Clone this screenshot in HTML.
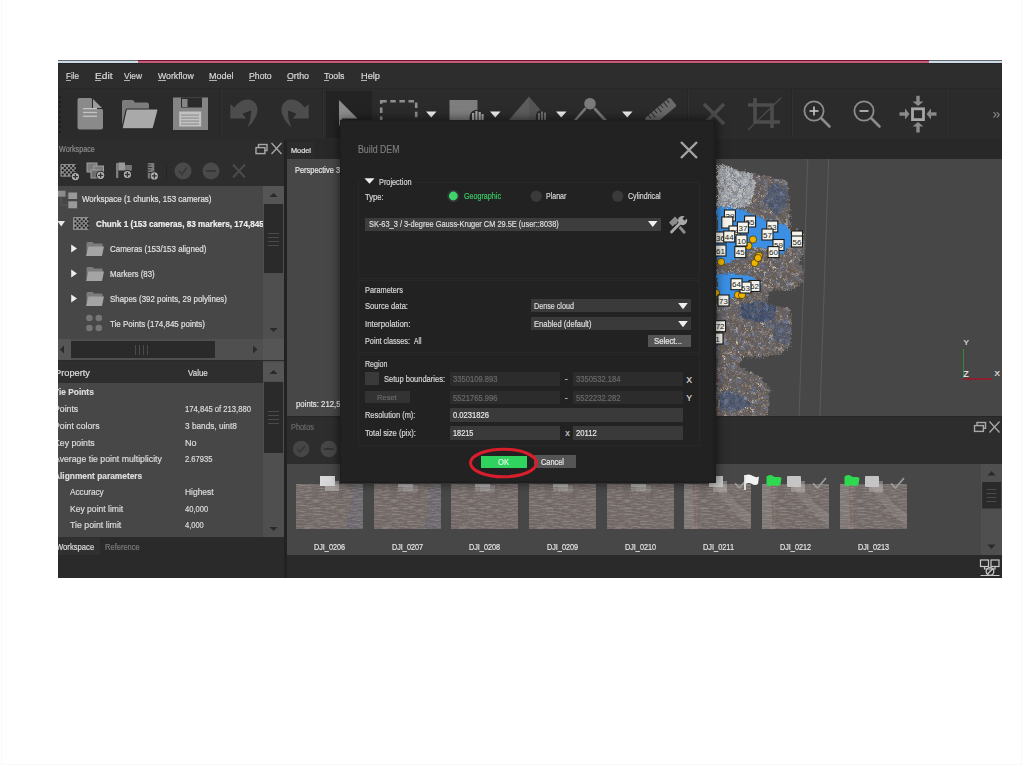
<!DOCTYPE html>
<html><head><meta charset="utf-8"><title>Build DEM</title>
<style>
html,body{margin:0;padding:0;}
body{width:1024px;height:767px;background:#ffffff;position:relative;overflow:hidden;font-family:"Liberation Sans",sans-serif;}
div,svg{position:absolute;}
.t{white-space:nowrap;-webkit-text-stroke:0.2px currentColor;}
</style></head><body>
<div style="left:1px;top:0px;width:1px;height:765px;background:#f9f9f9;"></div>
<div style="left:1021px;top:0px;width:1px;height:765px;background:#f8f8f8;"></div>
<div style="left:1px;top:764px;width:1021px;height:1px;background:#f9f9f9;"></div>
<div style="left:58px;top:60px;width:944px;height:518px;background:#2b2b2b;"></div>
<div style="left:58px;top:60px;width:944px;height:1px;background:#6a6a6a;"></div>
<div style="left:58px;top:61px;width:80px;height:2px;background:#c9dbe8;"></div>
<div style="left:138px;top:61px;width:791px;height:2px;background:#c06078;"></div>
<div style="left:138px;top:60px;width:791px;height:1px;background:#7a1030;"></div>
<div style="left:929px;top:61px;width:73px;height:2px;background:#c9dbe8;"></div>
<div style="left:58px;top:63px;width:944px;height:1px;background:#2a2426;"></div>
<div style="left:58px;top:64px;width:944px;height:24px;background:#2d2d2e;"></div>
<div class="t" style="left:66.0px;top:71.86px;font-size:8.99px;line-height:8.99px;color:#d6d6d6;transform:scaleX(0.898);transform-origin:0 0;">File</div>
<div style="left:66px;top:80px;width:4.9px;height:1px;background:#b0b0b0;"></div>
<div class="t" style="left:94.7px;top:71.86px;font-size:8.99px;line-height:8.99px;color:#d6d6d6;transform:scaleX(1.130);transform-origin:0 0;">Edit</div>
<div style="left:94.7px;top:80px;width:6.8px;height:1px;background:#b0b0b0;"></div>
<div class="t" style="left:124.0px;top:71.86px;font-size:8.99px;line-height:8.99px;color:#d6d6d6;transform:scaleX(0.932);transform-origin:0 0;">View</div>
<div style="left:124px;top:80px;width:5.6px;height:1px;background:#b0b0b0;"></div>
<div class="t" style="left:157.5px;top:71.86px;font-size:8.99px;line-height:8.99px;color:#d6d6d6;transform:scaleX(0.971);transform-origin:0 0;">Workflow</div>
<div style="left:157.5px;top:80px;width:8.2px;height:1px;background:#b0b0b0;"></div>
<div class="t" style="left:209.0px;top:71.86px;font-size:8.99px;line-height:8.99px;color:#d6d6d6;transform:scaleX(1.001);transform-origin:0 0;">Model</div>
<div style="left:209px;top:80px;width:7.5px;height:1px;background:#b0b0b0;"></div>
<div class="t" style="left:248.8px;top:71.86px;font-size:8.99px;line-height:8.99px;color:#d6d6d6;transform:scaleX(0.967);transform-origin:0 0;">Photo</div>
<div style="left:248.8px;top:80px;width:5.8px;height:1px;background:#b0b0b0;"></div>
<div class="t" style="left:286.7px;top:71.86px;font-size:8.99px;line-height:8.99px;color:#d6d6d6;transform:scaleX(0.979);transform-origin:0 0;">Ortho</div>
<div style="left:286.7px;top:80px;width:6.8px;height:1px;background:#b0b0b0;"></div>
<div class="t" style="left:324.0px;top:71.86px;font-size:8.99px;line-height:8.99px;color:#d6d6d6;transform:scaleX(0.977);transform-origin:0 0;">Tools</div>
<div style="left:324px;top:80px;width:5.4px;height:1px;background:#b0b0b0;"></div>
<div class="t" style="left:360.5px;top:71.86px;font-size:8.99px;line-height:8.99px;color:#d6d6d6;transform:scaleX(1.028);transform-origin:0 0;">Help</div>
<div style="left:360.5px;top:80px;width:6.7px;height:1px;background:#b0b0b0;"></div>
<div style="left:58px;top:88px;width:944px;height:52px;background:#2b2b2b;"></div>
<div style="left:59px;top:96px;width:2px;height:2px;background:#1c1c1c;"></div>
<div style="left:59px;top:101px;width:2px;height:2px;background:#1c1c1c;"></div>
<div style="left:59px;top:106px;width:2px;height:2px;background:#1c1c1c;"></div>
<div style="left:59px;top:111px;width:2px;height:2px;background:#1c1c1c;"></div>
<div style="left:59px;top:116px;width:2px;height:2px;background:#1c1c1c;"></div>
<div style="left:59px;top:121px;width:2px;height:2px;background:#1c1c1c;"></div>
<div style="left:59px;top:126px;width:2px;height:2px;background:#1c1c1c;"></div>
<div style="left:59px;top:131px;width:2px;height:2px;background:#1c1c1c;"></div>
<div style="left:58px;top:88px;width:944px;height:1px;background:#282828;"></div>
<div style="left:220px;top:89px;width:1px;height:47px;background:#262626;"></div>
<div style="left:221px;top:89px;width:1px;height:47px;background:#313131;"></div>
<div style="left:322px;top:89px;width:1px;height:47px;background:#262626;"></div>
<div style="left:323px;top:89px;width:1px;height:47px;background:#313131;"></div>
<div style="left:687px;top:89px;width:1px;height:47px;background:#262626;"></div>
<div style="left:688px;top:89px;width:1px;height:47px;background:#313131;"></div>
<div style="left:791px;top:89px;width:1px;height:47px;background:#262626;"></div>
<div style="left:792px;top:89px;width:1px;height:47px;background:#313131;"></div>
<div style="left:946px;top:89px;width:1px;height:47px;background:#262626;"></div>
<div style="left:947px;top:89px;width:1px;height:47px;background:#313131;"></div>
<div style="left:326px;top:91px;width:46px;height:47px;background:#232323;"></div>
<svg style="left:76px;top:96px;" width="30" height="36" viewBox="0 0 30 36">
<path d="M3.5,2 H15 L27,14 V31 Q27,33.5 24.5,33.5 H4 Q1.5,33.5 1.5,31 V4 Q1.5,2 3.5,2 Z" fill="#8a8a8a"/>
<path d="M16.5,2 L27,12.5 H16.5 Z" fill="#9c9c9c" stroke="#2b2b2b" stroke-width="1"/>
<rect x="7" y="12" width="14" height="1.3" fill="#c4c4c4"/>
<rect x="7" y="15.8" width="14" height="1.3" fill="#c4c4c4"/>
<rect x="7" y="19.6" width="14" height="1.3" fill="#c4c4c4"/>
</svg>
<svg style="left:120px;top:98px;" width="40" height="33" viewBox="0 0 40 33">
<path d="M2,3.5 Q2,2 3.5,2 H13 L15,4.5 H27 Q29,4.5 29,6.5 V26 H2 Z" fill="#7c7c7c"/>
<path d="M7.5,11 H37 Q38.5,11 38,12.5 L33.5,29.5 Q33,30.8 31.5,30.8 H3.5 Q1.8,30.8 2.3,29 L6,12.3 Q6.3,11 7.5,11 Z" fill="#a9a9a9" stroke="#2b2b2b" stroke-width="1.2"/>
</svg>
<svg style="left:172px;top:96px;" width="37" height="36" viewBox="0 0 37 36">
<path d="M1,1.5 H36 V34 H1 Z" fill="#858585"/>
<rect x="9" y="1.5" width="21" height="10" fill="#2b2b2b"/>
<rect x="10" y="3" width="5.5" height="8" fill="#858585"/>
<rect x="7.2" y="15.5" width="22" height="15" fill="#c2c2c2"/>
<rect x="9" y="18.5" width="18" height="1.1" fill="#8c8c8c"/>
<rect x="9" y="21.5" width="18" height="1.1" fill="#8c8c8c"/>
<rect x="9" y="24.5" width="18" height="1.1" fill="#8c8c8c"/>
<rect x="9" y="27.5" width="18" height="1.1" fill="#8c8c8c"/>
</svg>
<svg style="left:225px;top:92px;" width="40" height="40" viewBox="0 0 40 40"><path d="M5.3,12 L9.2,15.6 Q16,6.5 24,7.6 C32,9 34,17 31.5,23 Q28.5,30.5 22.5,35.5 Q26.5,27 26,18.5 L17.4,21.8 L21.2,26.4 L5.3,26.4 Z" fill="#4d4d4d"/></svg>
<svg style="left:275px;top:92px;" width="40" height="40" viewBox="0 0 40 40"><g transform="translate(39,0) scale(-1,1)"><path d="M5.3,12 L9.2,15.6 Q16,6.5 24,7.6 C32,9 34,17 31.5,23 Q28.5,30.5 22.5,35.5 Q26.5,27 26,18.5 L17.4,21.8 L21.2,26.4 L5.3,26.4 Z" fill="#4d4d4d"/></g></svg>
<svg style="left:336px;top:97px;" width="26" height="33" viewBox="0 0 26 33"><path d="M3,3 L3,30 L6,21.5 L21.5,21.5 Z" fill="#8d8d8d"/></svg>
<svg style="left:378px;top:98px;" width="42" height="32" viewBox="0 0 42 32"><rect x="3.2" y="3.2" width="35" height="30" fill="none" stroke="#8e8e8e" stroke-width="2.6" stroke-dasharray="5.5,3.6"/></svg>
<svg style="left:424.5px;top:110px;" width="13" height="9" viewBox="0 0 13 9"><path d="M1,1.5 L11.5,1.5 L6.25,7.5 Z" fill="#eeeeee"/></svg>
<svg style="left:489px;top:110px;" width="13" height="9" viewBox="0 0 13 9"><path d="M1,1.5 L11.5,1.5 L6.25,7.5 Z" fill="#eeeeee"/></svg>
<svg style="left:555px;top:110px;" width="13" height="9" viewBox="0 0 13 9"><path d="M1,1.5 L11.5,1.5 L6.25,7.5 Z" fill="#eeeeee"/></svg>
<svg style="left:620.6px;top:110px;" width="13" height="9" viewBox="0 0 13 9"><path d="M1,1.5 L11.5,1.5 L6.25,7.5 Z" fill="#eeeeee"/></svg>
<svg style="left:447px;top:98px;" width="40" height="26" viewBox="0 0 40 26">
<rect x="2.5" y="2" width="28" height="22" fill="#7e7e7e"/>
<path d="M23,24 Q21.5,16.5 25,13.5 Q30,10 35,14 Q38,17 37,24 Z" fill="#2b2b2b"/>
<rect x="25" y="15" width="2.2" height="9" fill="#a8a8a8"/><rect x="28.3" y="13" width="2.2" height="11" fill="#a8a8a8"/>
<rect x="31.6" y="14" width="2.2" height="10" fill="#a8a8a8"/><rect x="34.6" y="16" width="2" height="8" fill="#a8a8a8"/>
</svg>
<svg style="left:507px;top:94px;" width="45" height="30" viewBox="0 0 45 30">
<path d="M22,2.5 L2,26 L22,26 Z" fill="#5c5c5c"/><path d="M22,2.5 L42,26 L22,26 Z" fill="#545454"/>
<path d="M29,26 Q28,19 31.5,17 Q36,14.5 40,18 Q42,21 41.5,26 Z" fill="#2b2b2b"/>
<rect x="31" y="19" width="2" height="7" fill="#6e6e6e"/><rect x="34" y="17.5" width="2" height="8.5" fill="#6e6e6e"/>
<rect x="37" y="18.5" width="2" height="7.5" fill="#6e6e6e"/>
</svg>
<svg style="left:570px;top:95px;" width="42" height="29" viewBox="0 0 42 29">
<circle cx="20" cy="8.7" r="5.8" fill="#7b7b7b"/>
<path d="M15,14 L5,25.5" stroke="#7b7b7b" stroke-width="2.6" stroke-linecap="round"/>
<path d="M25,14 L35.5,25.5" stroke="#7b7b7b" stroke-width="2.6" stroke-linecap="round"/>
</svg>
<svg style="left:642px;top:96px;" width="36" height="28" viewBox="0 0 36 28">
<g transform="rotate(-40 18 16)"><rect x="2" y="11" width="33" height="11" rx="2" fill="#6a6a6a"/>
<path d="M7,11 v4 M11,11 v6 M15,11 v4 M19,11 v6 M23,11 v4 M27,11 v6 M31,11 v4" stroke="#2b2b2b" stroke-width="1"/></g>
</svg>
<svg style="left:700px;top:100px;" width="28" height="28" viewBox="0 0 28 28"><path d="M4,4 L24,24 M24,4 L4,24" stroke="#4d4d4d" stroke-width="3.6"/></svg>
<svg style="left:745px;top:95px;" width="39" height="36" viewBox="0 0 39 36">
<path d="M10,3 V27 H35 M3,10 H27 V33" fill="none" stroke="#4d4d4d" stroke-width="3.6"/>
<path d="M36,3 L3,35" stroke="#4d4d4d" stroke-width="1.2"/>
</svg>
<svg style="left:802px;top:98px;" width="32" height="32" viewBox="0 0 32 32"><circle cx="12" cy="13" r="9.6" fill="none" stroke="#8c8c8c" stroke-width="1.8"/>
<path d="M19,20 L27.5,28.5" stroke="#8c8c8c" stroke-width="2.6" stroke-linecap="round"/>
<path d="M7.5,13 H16.5" stroke="#c8c8c8" stroke-width="1.6"/><path d="M12,8.5 V17.5" stroke="#c8c8c8" stroke-width="1.6"/></svg>
<svg style="left:852px;top:98px;" width="32" height="32" viewBox="0 0 32 32"><circle cx="12" cy="13" r="9.6" fill="none" stroke="#8c8c8c" stroke-width="1.8"/>
<path d="M19,20 L27.5,28.5" stroke="#8c8c8c" stroke-width="2.6" stroke-linecap="round"/>
<path d="M7.5,13 H16.5" stroke="#c8c8c8" stroke-width="1.6"/></svg>
<svg style="left:897px;top:93px;" width="41" height="42" viewBox="0 0 41 42">
<rect x="15.5" y="15.8" width="11" height="10.8" fill="none" stroke="#a6a6a6" stroke-width="2.8"/>
<path d="M21,2.8 V9" stroke="#8a8a8a" stroke-width="3.4"/><path d="M15.5,8.5 H26.5 L21,13 Z" fill="#8a8a8a"/>
<path d="M21,39.5 V33" stroke="#8a8a8a" stroke-width="3.4"/><path d="M15.5,33.5 H26.5 L21,29 Z" fill="#8a8a8a"/>
<path d="M2.5,21 H8.5" stroke="#8a8a8a" stroke-width="3.4"/><path d="M8,15.5 V26.5 L12.5,21 Z" fill="#8a8a8a"/>
<path d="M39.5,21 H33.5" stroke="#8a8a8a" stroke-width="3.4"/><path d="M34,15.5 V26.5 L29.5,21 Z" fill="#8a8a8a"/>
</svg>
<svg style="left:990px;top:110px;" width="12" height="10" viewBox="0 0 12 10"><path d="M3.5,2 L6,4.8 L3.5,7.6 M6.8,2 L9.3,4.8 L6.8,7.6" fill="none" stroke="#8a8a8a" stroke-width="1.1"/></svg>
<div style="left:58px;top:140px;width:226px;height:19px;background:#2d2d2d;"></div>
<div class="t" style="left:59.0px;top:145.46px;font-size:8.41px;line-height:8.41px;color:#8a8a8a;transform:scaleX(0.852);transform-origin:0 0;">Workspace</div>
<svg style="left:254px;top:141px;" width="30" height="16" viewBox="0 0 30 16">
<rect x="4.5" y="3.5" width="8.5" height="6" fill="none" stroke="#a8a8a8" stroke-width="1.4"/>
<rect x="2" y="6.6" width="8.9" height="6" fill="#2d2d2d" stroke="#a8a8a8" stroke-width="1.4"/>
<path d="M17.5,2 L27.5,13 M27.5,2 L17.5,13" stroke="#a8a8a8" stroke-width="1.3"/>
</svg>
<div style="left:58px;top:159px;width:226px;height:27px;background:#2d2d2d;"></div>
<svg style="left:58px;top:160px;" width="24" height="22" viewBox="0 0 24 22"><rect x="2.4" y="4" width="15.4" height="12.8" rx="1" fill="#8c8c8c"/><circle cx="4.7" cy="6.0" r="1.1" fill="#1c1c1c"/><circle cx="4.7" cy="10.3" r="1.1" fill="#1c1c1c"/><circle cx="4.7" cy="14.6" r="1.1" fill="#1c1c1c"/><circle cx="6.800000000000001" cy="8.15" r="1.1" fill="#1c1c1c"/><circle cx="6.800000000000001" cy="12.45" r="1.1" fill="#1c1c1c"/><circle cx="8.9" cy="6.0" r="1.1" fill="#1c1c1c"/><circle cx="8.9" cy="10.3" r="1.1" fill="#1c1c1c"/><circle cx="8.9" cy="14.6" r="1.1" fill="#1c1c1c"/><circle cx="11.0" cy="8.15" r="1.1" fill="#1c1c1c"/><circle cx="11.0" cy="12.45" r="1.1" fill="#1c1c1c"/><circle cx="13.100000000000001" cy="6.0" r="1.1" fill="#1c1c1c"/><circle cx="13.100000000000001" cy="10.3" r="1.1" fill="#1c1c1c"/><circle cx="13.100000000000001" cy="14.6" r="1.1" fill="#1c1c1c"/><circle cx="15.2" cy="8.15" r="1.1" fill="#1c1c1c"/><circle cx="15.2" cy="12.45" r="1.1" fill="#1c1c1c"/><circle cx="17.3" cy="6.0" r="1.1" fill="#1c1c1c"/><circle cx="17.3" cy="10.3" r="1.1" fill="#1c1c1c"/><circle cx="17.3" cy="14.6" r="1.1" fill="#1c1c1c"/><circle cx="17.4" cy="16.6" r="4.6" fill="#2d2d2d"/><circle cx="17.4" cy="16.6" r="3.6" fill="#b4b4b4"/><path d="M14.899999999999999,16.6 H19.9 M17.4,14.100000000000001 V19.1" stroke="#333333" stroke-width="1.3"/></svg>
<svg style="left:84px;top:160px;" width="24" height="22" viewBox="0 0 24 22"><rect x="3" y="3" width="10" height="9" fill="#7a7a7a" stroke="#a0a0a0" stroke-width="1"/>
<rect x="10" y="6" width="9.5" height="8.5" fill="#7a7a7a" stroke="#a0a0a0" stroke-width="1"/>
<rect x="7" y="10" width="9" height="8" fill="#6e6e6e" stroke="#a0a0a0" stroke-width="1"/><circle cx="16.6" cy="15.3" r="4.6" fill="#2d2d2d"/><circle cx="16.6" cy="15.3" r="3.6" fill="#b4b4b4"/><path d="M14.100000000000001,15.3 H19.1 M16.6,12.8 V17.8" stroke="#333333" stroke-width="1.3"/></svg>
<svg style="left:112px;top:158px;" width="24" height="24" viewBox="0 0 24 24"><rect x="4" y="5" width="2.3" height="15" fill="#7e7e7e"/>
<path d="M6.3,4.5 H13 V7 H19.5 V12.5 H6.3 Z" fill="#9a9a9a"/><path d="M13,7 H19.5 V12.5 H13 Z" fill="#777"/><circle cx="15.4" cy="16.5" r="4.6" fill="#2d2d2d"/><circle cx="15.4" cy="16.5" r="3.6" fill="#b4b4b4"/><path d="M12.9,16.5 H17.9 M15.4,14.0 V19.0" stroke="#333333" stroke-width="1.3"/></svg>
<svg style="left:144px;top:158px;" width="18" height="24" viewBox="0 0 18 24"><rect x="3.8" y="5" width="6.5" height="15.5" fill="#7a7a7a"/>
<path d="M3.8,7 h3 M3.8,9.5 h4 M3.8,12 h3 M3.8,14.5 h4" stroke="#2d2d2d" stroke-width="0.9"/><circle cx="10.3" cy="17.9" r="4.6" fill="#2d2d2d"/><circle cx="10.3" cy="17.9" r="3.6" fill="#b4b4b4"/><path d="M7.800000000000001,17.9 H12.8 M10.3,15.399999999999999 V20.4" stroke="#333333" stroke-width="1.3"/></svg>
<div style="left:166px;top:163px;width:1px;height:18px;background:#262626;"></div>
<svg style="left:172px;top:160px;" width="78" height="22" viewBox="0 0 78 22">
<circle cx="11" cy="11" r="8.5" fill="#4a4a4a"/><path d="M7,11 L10,14 L15,7.5" fill="none" stroke="#383838" stroke-width="1.6"/>
<circle cx="39" cy="11" r="8.5" fill="#4a4a4a"/><path d="M34,11 H44" stroke="#383838" stroke-width="2"/>
<path d="M61,4.5 L73,17.5 M73,4.5 L61,17.5" stroke="#4a4a4a" stroke-width="2.2"/>
</svg>
<div style="left:58px;top:186px;width:205px;height:153px;background:#474747;"></div>
<div style="left:263px;top:186px;width:21px;height:153px;background:#4f4f4f;"></div>
<div style="left:263px;top:186px;width:21px;height:18px;background:#555555;"></div>
<svg style="left:263px;top:186px;" width="21" height="18" viewBox="0 0 21 18"><path d="M6.5,11 L10.5,7 L14.5,11 Z" fill="#2a2a2a"/></svg>
<div style="left:264px;top:204px;width:19px;height:69px;background:#2a2a2a;"></div>
<div style="left:268px;top:233px;width:11px;height:1px;background:#4a4a4a;"></div>
<div style="left:268px;top:237px;width:11px;height:1px;background:#4a4a4a;"></div>
<div style="left:268px;top:241px;width:11px;height:1px;background:#4a4a4a;"></div>
<div style="left:268px;top:245px;width:11px;height:1px;background:#4a4a4a;"></div>
<svg style="left:263px;top:322px;" width="21" height="17" viewBox="0 0 21 17"><path d="M6.5,6 L10.5,10 L14.5,6 Z" fill="#2a2a2a"/></svg>
<svg style="left:56px;top:188px;" width="24" height="22" viewBox="0 0 24 22">
<rect x="2" y="2.7" width="7.5" height="6" fill="#8c8c8c"/>
<rect x="12.3" y="4.5" width="8.8" height="6.5" fill="#9a9a9a"/>
<rect x="12.3" y="13.3" width="8.8" height="7" fill="#9a9a9a"/>
<path d="M5,8.7 V17 H12.3 M9.5,7.5 H12.3" fill="none" stroke="#5a5a5a" stroke-width="1"/>
</svg>
<div class="t" style="left:82.2px;top:194.76px;font-size:8.99px;line-height:8.99px;color:#e2e2e2;transform:scaleX(0.886);transform-origin:0 0;">Workspace (1 chunks, 153 cameras)</div>
<svg style="left:56px;top:219px;" width="10" height="9" viewBox="0 0 10 9"><path d="M1.5,2 L9,2 L5.2,7.5 Z" fill="#e8e8e8"/></svg>
<svg style="left:73px;top:216.5px;" width="16" height="13.5" viewBox="0 0 16 13.5"><rect x="0" y="0" width="15.3" height="13.3" rx="0.8" fill="#8d8d8d"/><circle cx="2.4" cy="2.2" r="1.05" fill="#1e1e1e"/><circle cx="2.4" cy="6.5" r="1.05" fill="#1e1e1e"/><circle cx="2.4" cy="10.8" r="1.05" fill="#1e1e1e"/><circle cx="4.5" cy="4.35" r="1.05" fill="#1e1e1e"/><circle cx="4.5" cy="8.649999999999999" r="1.05" fill="#1e1e1e"/><circle cx="6.6" cy="2.2" r="1.05" fill="#1e1e1e"/><circle cx="6.6" cy="6.5" r="1.05" fill="#1e1e1e"/><circle cx="6.6" cy="10.8" r="1.05" fill="#1e1e1e"/><circle cx="8.700000000000001" cy="4.35" r="1.05" fill="#1e1e1e"/><circle cx="8.700000000000001" cy="8.649999999999999" r="1.05" fill="#1e1e1e"/><circle cx="10.8" cy="2.2" r="1.05" fill="#1e1e1e"/><circle cx="10.8" cy="6.5" r="1.05" fill="#1e1e1e"/><circle cx="10.8" cy="10.8" r="1.05" fill="#1e1e1e"/><circle cx="12.9" cy="4.35" r="1.05" fill="#1e1e1e"/><circle cx="12.9" cy="8.649999999999999" r="1.05" fill="#1e1e1e"/><circle cx="15.000000000000002" cy="2.2" r="1.05" fill="#1e1e1e"/><circle cx="15.000000000000002" cy="6.5" r="1.05" fill="#1e1e1e"/><circle cx="15.000000000000002" cy="10.8" r="1.05" fill="#1e1e1e"/></svg>
<div style="left:58px;top:186px;width:205px;height:153px;overflow:hidden">
<div class="t" style="left:37.5px;top:33.99px;font-size:8.84px;line-height:8.84px;color:#eeeeee;font-weight:bold;transform:scaleX(0.924);transform-origin:0 0;">Chunk 1 (153 cameras, 83 markers, 174,845 points)</div>
</div>
<svg style="left:70px;top:244px;" width="8" height="9" viewBox="0 0 8 9"><path d="M1.2,0.6 L7,4.5 L1.2,8.4 Z" fill="#eeeeee"/></svg>
<svg style="left:84.5px;top:240.5px;" width="20" height="16" viewBox="0 0 20 16"><path d="M1.5,2.5 Q1.5,1 3,1 H7.5 L9,2.5 H16.5 Q17.5,2.5 17.5,3.5 V12 H1.5 Z" fill="#7c7c7c"/>
<path d="M3.5,5.5 H19 L17,15 H1 Z" fill="#a4a4a4"/></svg>
<div class="t" style="left:110.0px;top:244.52px;font-size:9.28px;line-height:9.28px;color:#e0e0e0;transform:scaleX(0.859);transform-origin:0 0;">Cameras (153/153 aligned)</div>
<svg style="left:70px;top:269px;" width="8" height="9" viewBox="0 0 8 9"><path d="M1.2,0.6 L7,4.5 L1.2,8.4 Z" fill="#eeeeee"/></svg>
<svg style="left:84.5px;top:265.5px;" width="20" height="16" viewBox="0 0 20 16"><path d="M1.5,2.5 Q1.5,1 3,1 H7.5 L9,2.5 H16.5 Q17.5,2.5 17.5,3.5 V12 H1.5 Z" fill="#7c7c7c"/>
<path d="M3.5,5.5 H19 L17,15 H1 Z" fill="#a4a4a4"/></svg>
<div class="t" style="left:110.0px;top:269.52px;font-size:9.28px;line-height:9.28px;color:#e0e0e0;transform:scaleX(0.850);transform-origin:0 0;">Markers (83)</div>
<svg style="left:70px;top:294px;" width="8" height="9" viewBox="0 0 8 9"><path d="M1.2,0.6 L7,4.5 L1.2,8.4 Z" fill="#eeeeee"/></svg>
<svg style="left:84.5px;top:290.5px;" width="20" height="16" viewBox="0 0 20 16"><path d="M1.5,2.5 Q1.5,1 3,1 H7.5 L9,2.5 H16.5 Q17.5,2.5 17.5,3.5 V12 H1.5 Z" fill="#7c7c7c"/>
<path d="M3.5,5.5 H19 L17,15 H1 Z" fill="#a4a4a4"/></svg>
<div class="t" style="left:110.0px;top:294.52px;font-size:9.28px;line-height:9.28px;color:#e0e0e0;transform:scaleX(0.853);transform-origin:0 0;">Shapes (392 points, 29 polylines)</div>
<svg style="left:84px;top:313px;" width="20" height="21" viewBox="0 0 20 21"><circle cx="5.4" cy="5" r="3.3" fill="#767676"/><circle cx="14.8" cy="5" r="3.3" fill="#767676"/><circle cx="5.4" cy="15" r="3.3" fill="#767676"/><circle cx="14.8" cy="15" r="3.3" fill="#767676"/></svg>
<div class="t" style="left:110.0px;top:319.52px;font-size:9.28px;line-height:9.28px;color:#e0e0e0;transform:scaleX(0.860);transform-origin:0 0;">Tie Points (174,845 points)</div>
<div style="left:58px;top:339px;width:226px;height:21px;background:#4f4f4f;"></div>
<div style="left:58px;top:339px;width:13px;height:21px;background:#555555;"></div>
<svg style="left:58px;top:339px;" width="13" height="21" viewBox="0 0 13 21"><path d="M2,10.5 L6,6.5 L6,14.5 Z" fill="#2a2a2a"/></svg>
<div style="left:71px;top:341px;width:144px;height:17px;background:#2a2a2a;"></div>
<div style="left:135px;top:345px;width:1px;height:10px;background:#4a4a4a;"></div>
<div style="left:139px;top:345px;width:1px;height:10px;background:#4a4a4a;"></div>
<div style="left:143px;top:345px;width:1px;height:10px;background:#4a4a4a;"></div>
<div style="left:147px;top:345px;width:1px;height:10px;background:#4a4a4a;"></div>
<svg style="left:245px;top:339px;" width="18" height="21" viewBox="0 0 18 21"><path d="M12.5,10.5 L8,6.5 L8,14.5 Z" fill="#2a2a2a"/></svg>
<div style="left:263px;top:339px;width:21px;height:21px;background:#555555;"></div>
<div style="left:58px;top:360px;width:226px;height:1px;background:#2a2a2a;"></div>
<div style="left:58px;top:361px;width:205px;height:22px;background:#2e2e2e;"></div>
<div style="left:58px;top:361px;width:100px;height:22px;overflow:hidden">
<div class="t" style="left:-3.5px;top:8.01px;font-size:8.70px;line-height:8.70px;color:#dddddd;transform:scaleX(1.065);transform-origin:0 0;">Property</div>
</div>
<div class="t" style="left:188.2px;top:369.01px;font-size:8.70px;line-height:8.70px;color:#dddddd;transform:scaleX(0.917);transform-origin:0 0;">Value</div>
<div style="left:58px;top:383px;width:205px;height:154px;background:#474747;"></div>
<div style="left:263px;top:361px;width:21px;height:176px;background:#4f4f4f;"></div>
<div style="left:263px;top:363px;width:21px;height:18px;background:#555555;"></div>
<svg style="left:263px;top:363px;" width="21" height="18" viewBox="0 0 21 18"><path d="M6.5,11 L10.5,7 L14.5,11 Z" fill="#2a2a2a"/></svg>
<div style="left:264px;top:382px;width:19px;height:71px;background:#2a2a2a;"></div>
<div style="left:268px;top:411px;width:11px;height:1px;background:#4a4a4a;"></div>
<div style="left:268px;top:415px;width:11px;height:1px;background:#4a4a4a;"></div>
<div style="left:268px;top:419px;width:11px;height:1px;background:#4a4a4a;"></div>
<div style="left:268px;top:423px;width:11px;height:1px;background:#4a4a4a;"></div>
<svg style="left:263px;top:521px;" width="21" height="17" viewBox="0 0 21 17"><path d="M6.5,6 L10.5,10 L14.5,6 Z" fill="#2a2a2a"/></svg>
<div style="left:58px;top:383px;width:205px;height:154px;overflow:hidden">
<div class="t" style="left:-4.0px;top:5.36px;font-size:8.99px;line-height:8.99px;color:#dcdcdc;font-weight:bold;transform:scaleX(0.930);transform-origin:0 0;">Tie Points</div>
<div class="t" style="left:-4.0px;top:22.26px;font-size:8.99px;line-height:8.99px;color:#dcdcdc;transform:scaleX(0.970);transform-origin:0 0;">Points</div>
<div class="t" style="left:127.0px;top:22.26px;font-size:8.99px;line-height:8.99px;color:#dcdcdc;transform:scaleX(0.852);transform-origin:0 0;">174,845 of 213,880</div>
<div class="t" style="left:-4.0px;top:38.86px;font-size:8.99px;line-height:8.99px;color:#dcdcdc;transform:scaleX(0.970);transform-origin:0 0;">Point colors</div>
<div class="t" style="left:127.0px;top:38.86px;font-size:8.99px;line-height:8.99px;color:#dcdcdc;transform:scaleX(0.918);transform-origin:0 0;">3 bands, uint8</div>
<div class="t" style="left:-4.0px;top:55.56px;font-size:8.99px;line-height:8.99px;color:#dcdcdc;transform:scaleX(0.970);transform-origin:0 0;">Key points</div>
<div class="t" style="left:127.0px;top:55.56px;font-size:8.99px;line-height:8.99px;color:#dcdcdc;transform:scaleX(1.001);transform-origin:0 0;">No</div>
<div class="t" style="left:-4.0px;top:72.26px;font-size:8.99px;line-height:8.99px;color:#dcdcdc;transform:scaleX(0.970);transform-origin:0 0;">Average tie point multiplicity</div>
<div class="t" style="left:127.0px;top:72.26px;font-size:8.99px;line-height:8.99px;color:#dcdcdc;transform:scaleX(0.844);transform-origin:0 0;">2.67935</div>
<div class="t" style="left:-4.0px;top:88.86px;font-size:8.99px;line-height:8.99px;color:#dcdcdc;font-weight:bold;transform:scaleX(0.930);transform-origin:0 0;">Alignment parameters</div>
<div class="t" style="left:11.5px;top:105.06px;font-size:8.99px;line-height:8.99px;color:#dcdcdc;transform:scaleX(0.912);transform-origin:0 0;">Accuracy</div>
<div class="t" style="left:127.0px;top:105.06px;font-size:8.99px;line-height:8.99px;color:#dcdcdc;transform:scaleX(0.939);transform-origin:0 0;">Highest</div>
<div class="t" style="left:11.5px;top:121.76px;font-size:8.99px;line-height:8.99px;color:#dcdcdc;transform:scaleX(0.952);transform-origin:0 0;">Key point limit</div>
<div class="t" style="left:127.0px;top:121.76px;font-size:8.99px;line-height:8.99px;color:#dcdcdc;transform:scaleX(0.844);transform-origin:0 0;">40,000</div>
<div class="t" style="left:11.5px;top:137.86px;font-size:8.99px;line-height:8.99px;color:#dcdcdc;transform:scaleX(0.975);transform-origin:0 0;">Tie point limit</div>
<div class="t" style="left:127.0px;top:137.86px;font-size:8.99px;line-height:8.99px;color:#dcdcdc;transform:scaleX(0.836);transform-origin:0 0;">4,000</div>
</div>
<div style="left:58px;top:537px;width:226px;height:18px;background:#2a2a2a;"></div>
<div style="left:58px;top:537px;width:42px;height:18px;background:#303030;"></div>
<div style="left:58px;top:537px;width:100px;height:18px;overflow:hidden">
<div class="t" style="left:-1.8px;top:5.56px;font-size:8.99px;line-height:8.99px;color:#dddddd;transform:scaleX(0.853);transform-origin:0 0;">Workspace</div>
</div>
<div class="t" style="left:105.0px;top:542.56px;font-size:8.99px;line-height:8.99px;color:#7a7a7a;transform:scaleX(0.839);transform-origin:0 0;">Reference</div>
<div style="left:58px;top:555px;width:226px;height:23px;background:#2a2a2a;"></div>
<div style="left:284px;top:140px;width:3px;height:438px;background:#222222;"></div>
<div style="left:287px;top:139px;width:715px;height:20px;background:#282828;"></div>
<div style="left:287px;top:142px;width:27px;height:17px;background:#2c2c2c;"></div>
<div class="t" style="left:290.7px;top:146.90px;font-size:8.12px;line-height:8.12px;color:#e4e4e4;transform:scaleX(0.905);transform-origin:0 0;">Model</div>
<div style="left:287px;top:159px;width:715px;height:258px;background:#474747;"></div>
<div class="t" style="left:295.4px;top:166.13px;font-size:8.55px;line-height:8.55px;color:#e8e8e8;transform:scaleX(0.870);transform-origin:0 0;">Perspective 30°</div>
<div class="t" style="left:295.5px;top:399.66px;font-size:8.41px;line-height:8.41px;color:#e2e2e2;transform:scaleX(0.925);transform-origin:0 0;">points: 212,586 of 213,880</div>
<svg style="left:790px;top:159px;" width="50" height="258" viewBox="0 0 50 258"><path d="M17.8,0 L9,258 M38.6,0 L29.8,258" stroke="#5a5a5a" stroke-width="1.1"/></svg>
<div style="left:962.5px;top:349px;width:1.5px;height:29px;background:#2f8a3c;"></div>
<div style="left:963px;top:378px;width:29px;height:2px;background:#8a2030;"></div>
<div class="t" style="left:963.5px;top:338.70px;font-size:8.12px;line-height:8.12px;color:#e0e0e0;">Y</div>
<div class="t" style="left:963.5px;top:369.66px;font-size:8.41px;line-height:8.41px;color:#f0f0f0;">Z</div>
<div class="t" style="left:994.5px;top:370.20px;font-size:8.12px;line-height:8.12px;color:#e8e8e8;">X</div>
<svg style="left:716px;top:159px;" width="96" height="258" viewBox="0 0 96 258">
<defs>
<filter id="spk" x="0" y="0" width="100%" height="100%">
<feTurbulence type="fractalNoise" baseFrequency="0.32" numOctaves="2" seed="7" result="n"/>
<feColorMatrix in="n" type="matrix" values="0 0 0 0 0.74  0 0 0 0 0.66  0 0 0 0 0.56  3.0 0 0 0 -1.45"/>
</filter>
<filter id="spk2" x="0" y="0" width="100%" height="100%">
<feTurbulence type="fractalNoise" baseFrequency="0.35" numOctaves="2" seed="3" result="n"/>
<feColorMatrix in="n" type="matrix" values="0 0 0 0 0.12  0 0 0 0 0.12  0 0 0 0 0.15  3.0 0 0 0 -1.15"/>
</filter>
<filter id="spk3" x="0" y="0" width="100%" height="100%">
<feTurbulence type="fractalNoise" baseFrequency="0.22" numOctaves="2" seed="19" result="n"/>
<feColorMatrix in="n" type="matrix" values="0 0 0 0 0.16  0 0 0 0 0.24  0 0 0 0 0.44  3.4 0 0 0 -1.85"/>
</filter>
<clipPath id="cl"><path d="M716,163 L725,163.5 L738,169 L751,171.5 L762,175 L773,177 L786,179.5 L787,192 L789,215 L789,228 L802,231 L804,249 L798,260 L802,270 L801,281 L792,288 L769,289.5 L765,303 L788,307 L790,317 L789,344 L780,352 L763,356 L740,356 L738,366 L759,375.5 L768.5,387 L767,407 L765,416.5 L716,416.5 Z" transform="translate(-716,-159)"/></clipPath>
<clipPath id="cb"><path d="M716,164 L725,164 L738,170 L751,172 L754,184 L751,197 L746,205 L732,207.5 L716,206 Z" transform="translate(-716,-159)"/></clipPath>
<filter id="rough" x="-5%" y="-5%" width="110%" height="110%">
<feTurbulence type="turbulence" baseFrequency="0.25" numOctaves="2" seed="2" result="t"/>
<feDisplacementMap in="SourceGraphic" in2="t" scale="5" xChannelSelector="R" yChannelSelector="G"/>
</filter>
</defs>
<g filter="url(#rough)"><g transform="translate(-716,-159)">
<g clip-path="url(#cl)" transform="translate(716,159)"><g transform="translate(-716,-159)">
<rect x="716" y="159" width="100" height="260" fill="#66594d"/>
<rect x="716" y="159" width="100" height="260" filter="url(#spk)" opacity="0.9"/>
<path d="M739,303 L760,300 L775,306 L773,319 L755,321 L739,316 Z" fill="#25406e" opacity="0.75"/>
<path d="M770,182 L785,184 L786,205 L775,215 L762,200 Z" fill="#2f4d7a" opacity="0.6"/>
<path d="M718,390 L735,392 L749,402 L740,410 L718,408 Z" fill="#28477a" opacity="0.6"/>
<path d="M770,320 L789,322 L788,343 L772,340 Z" fill="#2e4a78" opacity="0.45"/>
<rect x="716" y="159" width="100" height="260" filter="url(#spk3)"/><rect x="716" y="159" width="100" height="260" filter="url(#spk2)"/>
</g></g>
<g clip-path="url(#cb)" transform="translate(716,159)"><g transform="translate(-716,-159)">
<rect x="716" y="159" width="100" height="60" fill="#b0b6bc"/>
<rect x="716" y="159" width="100" height="60" filter="url(#spk)" opacity="0.9"/>
<rect x="716" y="159" width="100" height="60" filter="url(#spk2)" opacity="0.7"/>
</g></g>
<path d="M716,206 L730,206 L743,209.5 L755,215 L765,219 L773,220 L785,225 L790,231 L791,243 L785,249 L777,254.5 L770,253 L765,247 L752,246 L744,250 L738,256 L725,262 L716,262 Z" fill="#3a8fe4"/>
<path d="M716,273 L735,272.5 L751,275 L760,284 L744,293 L728,297 L716,297 Z" fill="#3a8fe4"/>
</g></g>
<circle cx="37" cy="80.5" r="3.6" fill="#f0b400" stroke="#3a3000" stroke-width="0.7"/><circle cx="32.5" cy="87" r="3.6" fill="#f0b400" stroke="#3a3000" stroke-width="0.7"/><circle cx="43" cy="96.80000000000001" r="3.6" fill="#f0b400" stroke="#3a3000" stroke-width="0.7"/><circle cx="38.700000000000045" cy="104" r="3.6" fill="#f0b400" stroke="#3a3000" stroke-width="0.7"/><circle cx="42" cy="99" r="3.6" fill="#f0b400" stroke="#3a3000" stroke-width="0.7"/><circle cx="5" cy="103" r="3.6" fill="#f0b400" stroke="#3a3000" stroke-width="0.7"/><circle cx="22" cy="136" r="3.6" fill="#f0b400" stroke="#3a3000" stroke-width="0.7"/><circle cx="26" cy="136" r="3.6" fill="#f0b400" stroke="#3a3000" stroke-width="0.7"/><circle cx="0" cy="134" r="3.6" fill="#f0b400" stroke="#3a3000" stroke-width="0.7"/><rect x="8.399999999999977" y="51" width="11" height="11" fill="#f4f4ec" stroke="#1a1a1a" stroke-width="1.1"/><text x="13.899999999999977" y="59.6" font-size="8" font-family="Liberation Sans" text-anchor="middle" fill="#1a1a1a">39</text><rect x="5.7999999999999545" y="58" width="11" height="11" fill="#f4f4ec" stroke="#1a1a1a" stroke-width="1.1"/><rect x="28.600000000000023" y="57" width="11" height="11" fill="#f4f4ec" stroke="#1a1a1a" stroke-width="1.1"/><text x="34.10000000000002" y="65.6" font-size="8" font-family="Liberation Sans" text-anchor="middle" fill="#1a1a1a">55</text><rect x="13" y="67" width="11" height="11" fill="#f4f4ec" stroke="#1a1a1a" stroke-width="1.1"/><text x="18.5" y="75.6" font-size="8" font-family="Liberation Sans" text-anchor="middle" fill="#1a1a1a">39</text><rect x="21.399999999999977" y="63" width="11" height="11" fill="#f4f4ec" stroke="#1a1a1a" stroke-width="1.1"/><text x="26.899999999999977" y="71.6" font-size="8" font-family="Liberation Sans" text-anchor="middle" fill="#1a1a1a">37</text><rect x="-1" y="73" width="11" height="11" fill="#f4f4ec" stroke="#1a1a1a" stroke-width="1.1"/><text x="4.5" y="81.6" font-size="8" font-family="Liberation Sans" text-anchor="middle" fill="#1a1a1a">36</text><rect x="7.7000000000000455" y="72" width="11" height="11" fill="#f4f4ec" stroke="#1a1a1a" stroke-width="1.1"/><text x="13.200000000000045" y="80.6" font-size="8" font-family="Liberation Sans" text-anchor="middle" fill="#1a1a1a">44</text><rect x="20" y="76" width="11" height="11" fill="#f4f4ec" stroke="#1a1a1a" stroke-width="1.1"/><text x="25.5" y="84.6" font-size="8" font-family="Liberation Sans" text-anchor="middle" fill="#1a1a1a">10</text><rect x="50.799999999999955" y="62" width="11" height="11" fill="#f4f4ec" stroke="#1a1a1a" stroke-width="1.1"/><text x="56.299999999999955" y="70.6" font-size="8" font-family="Liberation Sans" text-anchor="middle" fill="#1a1a1a">53</text><rect x="46" y="70" width="11" height="11" fill="#f4f4ec" stroke="#1a1a1a" stroke-width="1.1"/><text x="51.5" y="78.6" font-size="8" font-family="Liberation Sans" text-anchor="middle" fill="#1a1a1a">57</text><rect x="75.5" y="72" width="11" height="11" fill="#f4f4ec" stroke="#1a1a1a" stroke-width="1.1"/><rect x="75.5" y="77" width="11" height="11" fill="#f4f4ec" stroke="#1a1a1a" stroke-width="1.1"/><text x="81.0" y="85.6" font-size="8" font-family="Liberation Sans" text-anchor="middle" fill="#1a1a1a">56</text><rect x="57" y="80.5" width="11" height="11" fill="#f4f4ec" stroke="#1a1a1a" stroke-width="1.1"/><text x="62.5" y="89.1" font-size="8" font-family="Liberation Sans" text-anchor="middle" fill="#1a1a1a">59</text><rect x="52" y="87.6" width="11" height="11" fill="#f4f4ec" stroke="#1a1a1a" stroke-width="1.1"/><text x="57.5" y="96.19999999999999" font-size="8" font-family="Liberation Sans" text-anchor="middle" fill="#1a1a1a">60</text><rect x="18.799999999999955" y="87.6" width="11" height="11" fill="#f4f4ec" stroke="#1a1a1a" stroke-width="1.1"/><text x="24.299999999999955" y="96.19999999999999" font-size="8" font-family="Liberation Sans" text-anchor="middle" fill="#1a1a1a">45</text><rect x="-1" y="86" width="11" height="11" fill="#f4f4ec" stroke="#1a1a1a" stroke-width="1.1"/><text x="4.5" y="94.6" font-size="8" font-family="Liberation Sans" text-anchor="middle" fill="#1a1a1a">61</text><rect x="33" y="121.5" width="11" height="11" fill="#f4f4ec" stroke="#1a1a1a" stroke-width="1.1"/><text x="38.5" y="130.1" font-size="8" font-family="Liberation Sans" text-anchor="middle" fill="#1a1a1a">62</text><rect x="24" y="123" width="11" height="11" fill="#f4f4ec" stroke="#1a1a1a" stroke-width="1.1"/><text x="29.5" y="131.6" font-size="8" font-family="Liberation Sans" text-anchor="middle" fill="#1a1a1a">53</text><rect x="15" y="119.69999999999999" width="11" height="11" fill="#f4f4ec" stroke="#1a1a1a" stroke-width="1.1"/><text x="20.5" y="128.29999999999998" font-size="8" font-family="Liberation Sans" text-anchor="middle" fill="#1a1a1a">64</text><rect x="2" y="136" width="11" height="11" fill="#f4f4ec" stroke="#1a1a1a" stroke-width="1.1"/><text x="7.5" y="144.6" font-size="8" font-family="Liberation Sans" text-anchor="middle" fill="#1a1a1a">73</text><rect x="-1.3999999999999773" y="161.7" width="11" height="11" fill="#f4f4ec" stroke="#1a1a1a" stroke-width="1.1"/><text x="4.100000000000023" y="170.29999999999998" font-size="8" font-family="Liberation Sans" text-anchor="middle" fill="#1a1a1a">72</text><rect x="-4" y="174" width="11" height="11" fill="#f4f4ec" stroke="#1a1a1a" stroke-width="1.1"/><text x="1.5" y="182.6" font-size="8" font-family="Liberation Sans" text-anchor="middle" fill="#1a1a1a">1</text></svg>
<div style="left:287px;top:416px;width:715px;height:1px;background:#262626;"></div>
<div style="left:287px;top:417px;width:715px;height:47px;background:#2d2d2d;"></div>
<div class="t" style="left:291.0px;top:423.68px;font-size:8.26px;line-height:8.26px;color:#6a6a6a;transform:scaleX(0.894);transform-origin:0 0;">Photos</div>
<svg style="left:290px;top:438px;" width="50" height="22" viewBox="0 0 50 22">
<circle cx="11.2" cy="11" r="8.3" fill="#464646"/><path d="M7,11 L10,14 L15,8" fill="none" stroke="#333" stroke-width="1.5"/>
<circle cx="38.8" cy="11" r="8.3" fill="#464646"/><path d="M34,11 H43.5" stroke="#333" stroke-width="2"/>
</svg>
<svg style="left:972px;top:420px;" width="30" height="15" viewBox="0 0 30 15">
<rect x="5" y="2.5" width="8.5" height="5.8" fill="none" stroke="#a8a8a8" stroke-width="1.4"/>
<rect x="2.5" y="5.6" width="8.9" height="5.8" fill="#2d2d2d" stroke="#a8a8a8" stroke-width="1.4"/>
<path d="M17.5,1.5 L27.5,12.5 M27.5,1.5 L17.5,12.5" stroke="#a8a8a8" stroke-width="1.3"/>
</svg>
<div style="left:287px;top:464px;width:694px;height:91px;background:#474747;"></div>
<div style="left:981px;top:464px;width:21px;height:91px;background:#4f4f4f;"></div>
<svg style="left:981px;top:464px;" width="21" height="91" viewBox="0 0 21 91">
<path d="M6.5,11.5 L10.5,7 L14.5,11.5 Z" fill="#2a2a2a"/>
<rect x="1.2" y="18" width="19" height="26.5" fill="#2a2a2a"/>
<path d="M5.5,25.5 h10 M5.5,29.5 h10 M5.5,33.5 h10 M5.5,37.5 h10" stroke="#4a4a4a" stroke-width="1"/>
<path d="M6.5,80.5 L10.5,85 L14.5,80.5 Z" fill="#2a2a2a"/>
</svg>
<svg style="left:296px;top:484px;" width="67" height="45" viewBox="0 0 67 45"><defs>
<filter id="dirt" x="0" y="0" width="100%" height="100%">
<feTurbulence type="fractalNoise" baseFrequency="0.12 0.7" numOctaves="2" seed="11" result="n"/>
<feColorMatrix in="n" type="matrix" values="0 0 0 0 0.60  0 0 0 0 0.57  0 0 0 0 0.55  2.4 0 0 0 -1.0"/>
</filter>
<filter id="dirt2" x="0" y="0" width="100%" height="100%">
<feTurbulence type="fractalNoise" baseFrequency="0.6" numOctaves="1" seed="5" result="n"/>
<feColorMatrix in="n" type="matrix" values="0 0 0 0 0.28  0 0 0 0 0.26  0 0 0 0 0.25  2.6 0 0 0 -1.2"/>
</filter>
</defs><rect x="0" y="0" width="67" height="45" fill="#706764"/><path d="M54,0 L67,0 L67,45 L48,45 Q58,30 54,0 Z" fill="#5f6270" opacity="0.45"/><rect x="0" y="0" width="67" height="45" filter="url(#dirt)" opacity="0.35"/><rect x="0" y="0" width="67" height="45" filter="url(#dirt2)" opacity="0.4"/></svg>
<div class="t" style="left:314.0px;top:541.97px;font-size:9.57px;line-height:9.57px;color:#e4e4e4;transform:scaleX(0.757);transform-origin:0 0;">DJI_0206</div>
<svg style="left:374px;top:484px;" width="67" height="45" viewBox="0 0 67 45"><rect x="0" y="0" width="67" height="45" fill="#706764"/><path d="M54,0 L67,0 L67,45 L48,45 Q58,30 54,0 Z" fill="#5f6270" opacity="0.45"/><rect x="0" y="0" width="67" height="45" filter="url(#dirt)" opacity="0.35"/><rect x="0" y="0" width="67" height="45" filter="url(#dirt2)" opacity="0.4"/></svg>
<div class="t" style="left:391.7px;top:541.97px;font-size:9.57px;line-height:9.57px;color:#e4e4e4;transform:scaleX(0.757);transform-origin:0 0;">DJI_0207</div>
<svg style="left:451px;top:484px;" width="67" height="45" viewBox="0 0 67 45"><rect x="0" y="0" width="67" height="45" fill="#706764"/><rect x="0" y="0" width="67" height="45" filter="url(#dirt)" opacity="0.35"/><rect x="0" y="0" width="67" height="45" filter="url(#dirt2)" opacity="0.4"/></svg>
<div class="t" style="left:469.4px;top:541.97px;font-size:9.57px;line-height:9.57px;color:#e4e4e4;transform:scaleX(0.757);transform-origin:0 0;">DJI_0208</div>
<svg style="left:529px;top:484px;" width="67" height="45" viewBox="0 0 67 45"><rect x="0" y="0" width="67" height="45" fill="#706764"/><rect x="0" y="0" width="67" height="45" filter="url(#dirt)" opacity="0.35"/><rect x="0" y="0" width="67" height="45" filter="url(#dirt2)" opacity="0.4"/></svg>
<div class="t" style="left:547.1px;top:541.97px;font-size:9.57px;line-height:9.57px;color:#e4e4e4;transform:scaleX(0.757);transform-origin:0 0;">DJI_0209</div>
<svg style="left:607px;top:484px;" width="67" height="45" viewBox="0 0 67 45"><rect x="0" y="0" width="67" height="45" fill="#706764"/><rect x="0" y="0" width="67" height="45" filter="url(#dirt)" opacity="0.35"/><rect x="0" y="0" width="67" height="45" filter="url(#dirt2)" opacity="0.4"/></svg>
<div class="t" style="left:624.8px;top:541.97px;font-size:9.57px;line-height:9.57px;color:#e4e4e4;transform:scaleX(0.757);transform-origin:0 0;">DJI_0210</div>
<svg style="left:684px;top:484px;" width="67" height="45" viewBox="0 0 67 45"><rect x="0" y="0" width="67" height="45" fill="#706764"/><path d="M30,0 Q42,25 67,42 L67,30 Q50,20 40,0 Z" fill="#8a8480" opacity="0.5"/><path d="M0,0 L12,0 L13,45 L0,45 Z" fill="#8e8a84" opacity="0.45"/><path d="M9,0 L11,0 L12.5,45 L10.5,45 Z" fill="#7a4a3a" opacity="0.35"/><rect x="0" y="0" width="67" height="45" filter="url(#dirt)" opacity="0.35"/><rect x="0" y="0" width="67" height="45" filter="url(#dirt2)" opacity="0.4"/></svg>
<div class="t" style="left:702.5px;top:541.97px;font-size:9.57px;line-height:9.57px;color:#e4e4e4;transform:scaleX(0.770);transform-origin:0 0;">DJI_0211</div>
<svg style="left:762px;top:484px;" width="67" height="45" viewBox="0 0 67 45"><rect x="0" y="0" width="67" height="45" fill="#706764"/><path d="M30,0 Q42,25 67,42 L67,30 Q50,20 40,0 Z" fill="#8a8480" opacity="0.5"/><path d="M0,0 L12,0 L13,45 L0,45 Z" fill="#8e8a84" opacity="0.45"/><path d="M9,0 L11,0 L12.5,45 L10.5,45 Z" fill="#7a4a3a" opacity="0.35"/><rect x="0" y="0" width="67" height="45" filter="url(#dirt)" opacity="0.35"/><rect x="0" y="0" width="67" height="45" filter="url(#dirt2)" opacity="0.4"/></svg>
<div class="t" style="left:780.2px;top:541.97px;font-size:9.57px;line-height:9.57px;color:#e4e4e4;transform:scaleX(0.757);transform-origin:0 0;">DJI_0212</div>
<svg style="left:840px;top:484px;" width="67" height="45" viewBox="0 0 67 45"><rect x="0" y="0" width="67" height="45" fill="#706764"/><path d="M30,0 Q42,25 67,42 L67,30 Q50,20 40,0 Z" fill="#8a8480" opacity="0.5"/><path d="M0,0 L12,0 L13,45 L0,45 Z" fill="#8e8a84" opacity="0.45"/><path d="M9,0 L11,0 L12.5,45 L10.5,45 Z" fill="#7a4a3a" opacity="0.35"/><rect x="0" y="0" width="67" height="45" filter="url(#dirt)" opacity="0.35"/><rect x="0" y="0" width="67" height="45" filter="url(#dirt2)" opacity="0.4"/></svg>
<div class="t" style="left:857.9px;top:541.97px;font-size:9.57px;line-height:9.57px;color:#e4e4e4;transform:scaleX(0.757);transform-origin:0 0;">DJI_0213</div>
<div style="left:320px;top:476px;width:15px;height:10px;background:#d8d8d8;"></div>
<div style="left:325px;top:481px;width:14px;height:10px;background:rgba(210,210,210,0.45);"></div>
<div style="left:398px;top:484px;width:15px;height:3px;background:#b0b0b0;"></div>
<div style="left:398px;top:487px;width:15px;height:4px;background:rgba(200,200,200,0.3);"></div>
<div style="left:403px;top:485px;width:15px;height:7px;background:rgba(200,200,200,0.25);"></div>
<div style="left:475px;top:484px;width:15px;height:3px;background:#b0b0b0;"></div>
<div style="left:475px;top:487px;width:15px;height:4px;background:rgba(200,200,200,0.3);"></div>
<div style="left:480px;top:485px;width:15px;height:7px;background:rgba(200,200,200,0.25);"></div>
<div style="left:553px;top:484px;width:15px;height:3px;background:#b0b0b0;"></div>
<div style="left:553px;top:487px;width:15px;height:4px;background:rgba(200,200,200,0.3);"></div>
<div style="left:558px;top:485px;width:15px;height:7px;background:rgba(200,200,200,0.25);"></div>
<div style="left:631px;top:484px;width:15px;height:3px;background:#b0b0b0;"></div>
<div style="left:631px;top:487px;width:15px;height:4px;background:rgba(200,200,200,0.3);"></div>
<div style="left:636px;top:485px;width:15px;height:7px;background:rgba(200,200,200,0.25);"></div>
<div style="left:709px;top:475.5px;width:14px;height:11px;background:#c4c4c4;"></div>
<div style="left:713px;top:481px;width:14px;height:11px;background:rgba(200,200,200,0.4);"></div>
<svg style="left:733px;top:476px;" width="17" height="14" viewBox="0 0 17 14"><path d="M2,7.5 L6.5,12 L15,2" fill="none" stroke="#9a9a9a" stroke-width="1.8"/></svg>
<svg style="left:742px;top:472px;" width="18" height="20" viewBox="0 0 18 20"><path d="M3,3 V18" stroke="#e8e8e8" stroke-width="1.8"/><path d="M3.5,3 Q8,1.5 11,4 Q14,6 17,4.5 L16,12 Q13,14 10,12 Q7,10 3.5,12 Z" fill="#f2f2f2"/></svg>
<div style="left:787px;top:475.5px;width:14px;height:11px;background:#c4c4c4;border-radius:1px;"></div>
<div style="left:791px;top:481px;width:14px;height:11px;background:rgba(200,200,200,0.4);"></div>
<svg style="left:811px;top:476px;" width="17" height="14" viewBox="0 0 17 14"><path d="M2,7.5 L6.5,12 L15,2" fill="none" stroke="#9a9a9a" stroke-width="1.8"/></svg>
<svg style="left:765px;top:473px;" width="18" height="16" viewBox="0 0 18 16"><path d="M1.5,3.5 Q4,1 7.5,2.5 Q9,4.5 12,4 Q15,3.5 16.5,5 L15.5,11.5 Q13,14 10,12.5 Q7.5,11 5,13.5 Q2,13 1.5,11 Z" fill="#2fd94f"/></svg>
<div style="left:865px;top:475.5px;width:14px;height:11px;background:#c4c4c4;border-radius:1px;"></div>
<div style="left:869px;top:481px;width:14px;height:11px;background:rgba(200,200,200,0.4);"></div>
<svg style="left:889px;top:476px;" width="17" height="14" viewBox="0 0 17 14"><path d="M2,7.5 L6.5,12 L15,2" fill="none" stroke="#9a9a9a" stroke-width="1.8"/></svg>
<svg style="left:843px;top:473px;" width="18" height="16" viewBox="0 0 18 16"><path d="M1.5,3.5 Q4,1 7.5,2.5 Q9,4.5 12,4 Q15,3.5 16.5,5 L15.5,11.5 Q13,14 10,12.5 Q7.5,11 5,13.5 Q2,13 1.5,11 Z" fill="#2fd94f"/></svg>
<div style="left:287px;top:555px;width:715px;height:23px;background:#2a2a2a;"></div>
<svg style="left:978px;top:558px;" width="24" height="20" viewBox="0 0 24 20">
<rect x="2.5" y="2" width="8" height="6.5" fill="none" stroke="#c8c8c8" stroke-width="1.2"/>
<rect x="13" y="2" width="8" height="6.5" fill="none" stroke="#c8c8c8" stroke-width="1.2"/>
<path d="M6.5,8.5 V11 H17 V8.5 M2.5,17.5 H21.5" fill="none" stroke="#c8c8c8" stroke-width="1.2"/>
<circle cx="12" cy="13.5" r="3.8" fill="none" stroke="#c8c8c8" stroke-width="1.3"/><path d="M9,16.5 L15,10.5" stroke="#c8c8c8" stroke-width="1.2"/>
</svg>
<div style="left:340px;top:120px;width:376px;height:363px;background:#1e1e1e;box-shadow:0 0 9px 1px rgba(0,0,0,0.55);"></div>
<div style="left:341px;top:121px;width:372px;height:360px;background:#222222;"></div>
<div class="t" style="left:357.8px;top:145.38px;font-size:10.14px;line-height:10.14px;color:#7c7c7c;transform:scaleX(0.868);transform-origin:0 0;">Build DEM</div>
<svg style="left:676px;top:137px;" width="26" height="26" viewBox="0 0 26 26"><path d="M5,5 L21,21 M21,5 L5,21" stroke="#a4a4a4" stroke-width="2.4"/></svg>
<div style="left:358px;top:182px;width:342px;height:1px;background:#282828;"></div>
<div style="left:358px;top:278px;width:342px;height:1px;background:#282828;"></div>
<div style="left:358px;top:182px;width:1px;height:97px;background:#282828;"></div>
<div style="left:699px;top:182px;width:1px;height:97px;background:#282828;"></div>
<div style="left:358px;top:280px;width:342px;height:1px;background:#282828;"></div>
<div style="left:358px;top:352px;width:342px;height:1px;background:#282828;"></div>
<div style="left:358px;top:280px;width:1px;height:73px;background:#282828;"></div>
<div style="left:699px;top:280px;width:1px;height:73px;background:#282828;"></div>
<div style="left:358px;top:354px;width:342px;height:1px;background:#282828;"></div>
<div style="left:358px;top:445px;width:342px;height:1px;background:#282828;"></div>
<div style="left:358px;top:354px;width:1px;height:92px;background:#282828;"></div>
<div style="left:699px;top:354px;width:1px;height:92px;background:#282828;"></div>
<div style="left:362px;top:176px;width:52px;height:12px;background:#222222;"></div>
<svg style="left:363px;top:177px;" width="13" height="8" viewBox="0 0 13 8"><path d="M1.5,1.3 L11.5,1.3 L6.5,6.8 Z" fill="#eeeeee"/></svg>
<div class="t" style="left:378.8px;top:177.61px;font-size:8.70px;line-height:8.70px;color:#d6d6d6;transform:scaleX(0.843);transform-origin:0 0;">Projection</div>
<div class="t" style="left:365.2px;top:192.61px;font-size:8.70px;line-height:8.70px;color:#d6d6d6;transform:scaleX(0.875);transform-origin:0 0;">Type:</div>
<svg style="left:446px;top:189px;" width="15" height="15" viewBox="0 0 15 15"><circle cx="7.3" cy="7" r="6.2" fill="#333333"/><circle cx="7.3" cy="7" r="4.4" fill="#3fd46c"/></svg>
<div class="t" style="left:463.6px;top:192.39px;font-size:8.84px;line-height:8.84px;color:#3cc865;transform:scaleX(0.810);transform-origin:0 0;">Geographic</div>
<svg style="left:529px;top:189px;" width="15" height="15" viewBox="0 0 15 15"><circle cx="7.2" cy="7.2" r="5.6" fill="#3a3a3a"/></svg>
<div class="t" style="left:546.0px;top:192.39px;font-size:8.84px;line-height:8.84px;color:#d6d6d6;transform:scaleX(0.794);transform-origin:0 0;">Planar</div>
<svg style="left:611px;top:189px;" width="15" height="15" viewBox="0 0 15 15"><circle cx="6.7" cy="7.2" r="5.6" fill="#3a3a3a"/></svg>
<div class="t" style="left:628.3px;top:192.39px;font-size:8.84px;line-height:8.84px;color:#d6d6d6;transform:scaleX(0.802);transform-origin:0 0;">Cylindrical</div>
<div style="left:365px;top:217.5px;width:295.5px;height:13.5px;background:#3d3d3d;"></div>
<div class="t" style="left:368.8px;top:220.39px;font-size:8.84px;line-height:8.84px;color:#dedede;transform:scaleX(0.839);transform-origin:0 0;">SK-63_3 / 3-degree Gauss-Kruger CM 29.5E (user::8038)</div>
<svg style="left:646px;top:219px;" width="14" height="10" viewBox="0 0 14 10"><path d="M2,2 L11.5,2 L6.75,8 Z" fill="#f0f0f0"/></svg>
<svg style="left:666px;top:213px;" width="24" height="23" viewBox="0 0 24 23">
<path d="M3,9.5 L9,3.5 L12.8,7.6 L6.6,13.4 Z" fill="#8c8c8c"/>
<path d="M10.5,10.5 L18.2,19.2" stroke="#8c8c8c" stroke-width="2.9" stroke-linecap="round"/>
<path d="M5.5,19 L14.5,9.8" stroke="#222" stroke-width="4.6" stroke-linecap="round"/>
<path d="M5.5,19 L14.5,9.8" stroke="#a9a9a9" stroke-width="2.8" stroke-linecap="round"/>
<circle cx="16.6" cy="7.6" r="4.6" fill="#a9a9a9"/>
<path d="M17.5,6.7 L22,2.2" stroke="#222" stroke-width="3.2"/>
</svg>
<div class="t" style="left:364.9px;top:285.79px;font-size:8.84px;line-height:8.84px;color:#d6d6d6;transform:scaleX(0.832);transform-origin:0 0;">Parameters</div>
<div class="t" style="left:365.0px;top:302.19px;font-size:8.84px;line-height:8.84px;color:#d6d6d6;transform:scaleX(0.858);transform-origin:0 0;">Source data:</div>
<div class="t" style="left:365.0px;top:320.19px;font-size:8.84px;line-height:8.84px;color:#d6d6d6;transform:scaleX(0.890);transform-origin:0 0;">Interpolation:</div>
<div class="t" style="left:365.0px;top:337.39px;font-size:8.84px;line-height:8.84px;color:#d6d6d6;transform:scaleX(0.825);transform-origin:0 0;">Point classes:</div>
<div class="t" style="left:414.2px;top:337.39px;font-size:8.84px;line-height:8.84px;color:#d6d6d6;transform:scaleX(0.753);transform-origin:0 0;">All</div>
<div style="left:530.7px;top:298.7px;width:160.3px;height:13.6px;background:#3a3a3a;"></div>
<div class="t" style="left:533.7px;top:301.59px;font-size:8.84px;line-height:8.84px;color:#dedede;transform:scaleX(0.814);transform-origin:0 0;">Dense cloud</div>
<svg style="left:677px;top:302px;" width="13" height="8" viewBox="0 0 13 8"><path d="M1.2,1 L10.8,1 L6,7.2 Z" fill="#f0f0f0"/></svg>
<div style="left:530.7px;top:316.6px;width:160.3px;height:13.7px;background:#3a3a3a;"></div>
<div class="t" style="left:533.7px;top:319.59px;font-size:8.84px;line-height:8.84px;color:#dedede;transform:scaleX(0.854);transform-origin:0 0;">Enabled (default)</div>
<svg style="left:677px;top:320px;" width="13" height="8" viewBox="0 0 13 8"><path d="M1.2,1 L10.8,1 L6,7.2 Z" fill="#f0f0f0"/></svg>
<div style="left:648px;top:334.8px;width:43px;height:12.2px;background:#545454;"></div>
<div class="t" style="left:653.5px;top:336.81px;font-size:8.70px;line-height:8.70px;color:#e8e8e8;transform:scaleX(0.891);transform-origin:0 0;">Select...</div>
<div class="t" style="left:365.0px;top:360.01px;font-size:8.70px;line-height:8.70px;color:#d6d6d6;transform:scaleX(0.816);transform-origin:0 0;">Region</div>
<div style="left:365.2px;top:372.3px;width:13.5px;height:13.2px;background:#3a3a3a;"></div>
<div class="t" style="left:383.8px;top:375.46px;font-size:8.99px;line-height:8.99px;color:#d6d6d6;transform:scaleX(0.836);transform-origin:0 0;">Setup boundaries:</div>
<div style="left:450px;top:372.3px;width:110px;height:14.1px;background:#2c2c2c;"></div>
<div style="left:573px;top:372.3px;width:109.5px;height:14.1px;background:#2c2c2c;"></div>
<div style="left:450px;top:390.8px;width:110px;height:13.2px;background:#2c2c2c;"></div>
<div style="left:573px;top:390.8px;width:109.5px;height:13.2px;background:#2c2c2c;"></div>
<div class="t" style="left:453.2px;top:375.41px;font-size:8.70px;line-height:8.70px;color:#6a6a6a;transform:scaleX(0.876);transform-origin:0 0;">3350109.893</div>
<div class="t" style="left:576.4px;top:375.41px;font-size:8.70px;line-height:8.70px;color:#6a6a6a;transform:scaleX(0.876);transform-origin:0 0;">3350532.184</div>
<div class="t" style="left:453.2px;top:393.61px;font-size:8.70px;line-height:8.70px;color:#6a6a6a;transform:scaleX(0.876);transform-origin:0 0;">5521765.996</div>
<div class="t" style="left:576.4px;top:393.61px;font-size:8.70px;line-height:8.70px;color:#6a6a6a;transform:scaleX(0.876);transform-origin:0 0;">5522232.282</div>
<div class="t" style="left:564.8px;top:375.46px;font-size:8.99px;line-height:8.99px;color:#bbbbbb;">-</div>
<div class="t" style="left:564.8px;top:393.56px;font-size:8.99px;line-height:8.99px;color:#bbbbbb;">-</div>
<div class="t" style="left:686.2px;top:375.51px;font-size:8.70px;line-height:8.70px;color:#dddddd;">X</div>
<div class="t" style="left:686.2px;top:393.61px;font-size:8.70px;line-height:8.70px;color:#dddddd;">Y</div>
<div style="left:365px;top:391.3px;width:45.4px;height:11.7px;background:#333333;"></div>
<div class="t" style="left:377.0px;top:393.70px;font-size:8.12px;line-height:8.12px;color:#6a6a6a;transform:scaleX(0.929);transform-origin:0 0;">Reset</div>
<div class="t" style="left:364.9px;top:411.46px;font-size:8.99px;line-height:8.99px;color:#d6d6d6;transform:scaleX(0.827);transform-origin:0 0;">Resolution (m):</div>
<div style="left:450px;top:408.3px;width:232.5px;height:14.1px;background:#3a3a3a;"></div>
<div class="t" style="left:453.2px;top:411.46px;font-size:8.99px;line-height:8.99px;color:#e6e6e6;transform:scaleX(0.848);transform-origin:0 0;">0.0231826</div>
<div class="t" style="left:365.0px;top:429.26px;font-size:8.99px;line-height:8.99px;color:#d6d6d6;transform:scaleX(0.851);transform-origin:0 0;">Total size (pix):</div>
<div style="left:450px;top:426.4px;width:110px;height:13.6px;background:#3a3a3a;"></div>
<div style="left:573px;top:426.4px;width:109.5px;height:13.6px;background:#3a3a3a;"></div>
<div class="t" style="left:453.2px;top:429.26px;font-size:8.99px;line-height:8.99px;color:#e6e6e6;transform:scaleX(0.816);transform-origin:0 0;">18215</div>
<div class="t" style="left:576.4px;top:429.26px;font-size:8.99px;line-height:8.99px;color:#e6e6e6;transform:scaleX(0.851);transform-origin:0 0;">20112</div>
<div class="t" style="left:565.2px;top:429.26px;font-size:8.99px;line-height:8.99px;color:#cccccc;">x</div>
<div style="left:481px;top:455.6px;width:45.6px;height:12.4px;background:#2fd35e;"></div>
<div class="t" style="left:497.7px;top:457.76px;font-size:8.99px;line-height:8.99px;color:#d8f5e0;transform:scaleX(0.855);transform-origin:0 0;">OK</div>
<div style="left:534.4px;top:455px;width:41.4px;height:13px;background:#555555;"></div>
<div class="t" style="left:540.7px;top:457.76px;font-size:8.99px;line-height:8.99px;color:#e8e8e8;transform:scaleX(0.822);transform-origin:0 0;">Cancel</div>
<svg style="left:466px;top:445px;" width="75" height="36" viewBox="0 0 75 36"><ellipse cx="37.5" cy="18" rx="33" ry="13.8" fill="none" stroke="#d81e2c" stroke-width="3"/></svg>
</body></html>
